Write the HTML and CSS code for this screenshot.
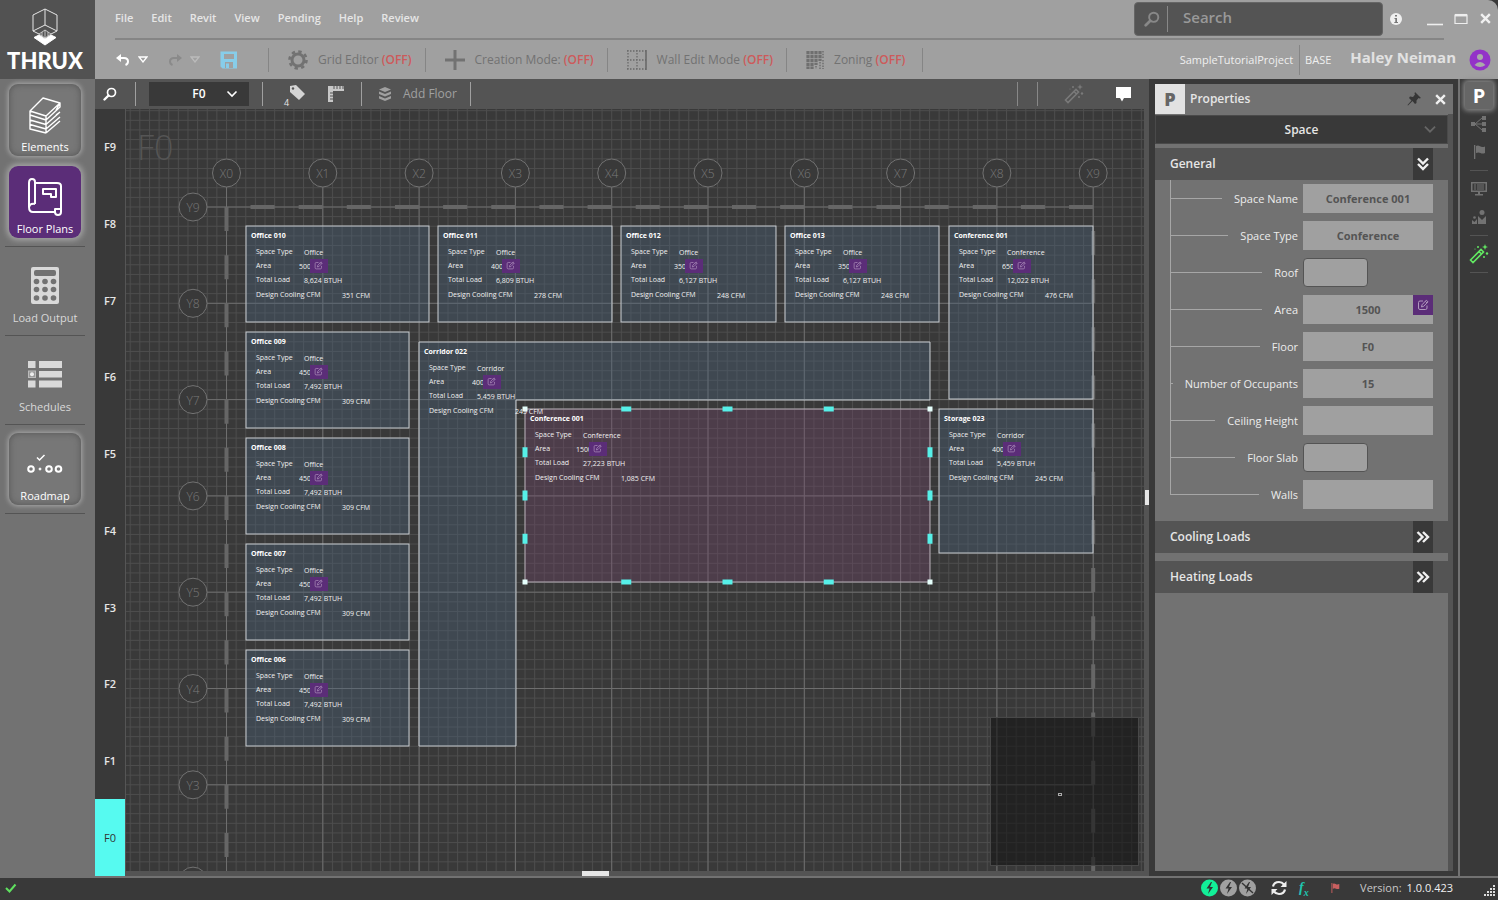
FILE: index.html
```html
<!DOCTYPE html>
<html lang="en">
<head>
<meta charset="utf-8">
<title>THRUX</title>
<link rel="stylesheet" href="styles.css">
</head>
<body>
<svg class="defs" aria-hidden="true">
  <symbol id="edit" viewBox="0 0 12 12"><path d="M6 2H3Q1.500 2 1.500 3.500V9Q1.500 10.500 3 10.500H8.500Q10 10.500 10 9V6.500M4.500 8L5 5.800L9.300 1.200L11 2.800L6.700 7.300Z M8.300 2.300L9.900 3.900" fill="none" stroke="currentColor" stroke-width="1"/></symbol>
  <symbol id="wand" viewBox="0 0 20 20"><path d="M1.500 16L12 5.500L14.500 8L4 18.500Z M10 7.500L12.500 10" fill="none" stroke="currentColor" stroke-width="1.600"/><path d="M16 0L16.800 2.200L19 3L16.800 3.800L16 6L15.200 3.800L13 3L15.200 2.200Z"/><circle cx="9" cy="3" r="1"/><circle cx="18" cy="9.500" r="1.200"/><circle cx="15" cy="13" r="1"/><circle cx="6" cy="5" r=".6"/></symbol>
  <symbol id="lens" viewBox="0 0 14 14"><circle cx="8.500" cy="5.500" r="4" fill="none" stroke="currentColor" stroke-width="1.700"/><path d="M5.500 8.500L1.500 12.500" stroke="currentColor" stroke-width="2.400" stroke-linecap="round"/></symbol>
  <symbol id="chev" viewBox="0 0 12 8"><path d="M1.500 1.500L6 6L10.500 1.500" fill="none" stroke="currentColor" stroke-width="1.600"/></symbol>
  <symbol id="dchev" viewBox="0 0 14 14"><path d="M1.500 2L6.500 7L1.500 12M7 2L12 7L7 12" fill="none" stroke="currentColor" stroke-width="2.400"/></symbol>
  <symbol id="undo" viewBox="0 0 14 12"><path d="M2.500 4H8Q12 4 12 7.500Q12 10 9.500 11" fill="none" stroke="currentColor" stroke-width="2"/><path d="M0 4L5 0V8Z"/></symbol>
  <symbol id="tri" viewBox="0 0 10 7"><path d="M1 1H9L5 6Z" fill="none" stroke="currentColor" stroke-width="1.300"/></symbol>
  <symbol id="cross" viewBox="0 0 12 12"><path d="M2 2L10 10M10 2L2 10" stroke="currentColor" stroke-width="2.200"/></symbol>
  <symbol id="flag" viewBox="0 0 12 14"><path d="M1 0H2.300V14H1Z M3 1Q5 0 7 1.300T12 1.500V8Q9.500 9 7.500 8T3 8Z"/></symbol>
</svg>
<div class="app">
  <div class="brand">
    <svg width="28" height="38" viewBox="0 0 28 38" fill="none" stroke="#fff" stroke-width="1"><path d="M14 1L26 7V23L20 26M14 1L2 7V23L8 26M14 1V17M14 17L2 23M14 17L26 23" stroke="#e6e6e6"/><path d="M3 29.500L8 27L14 31L20 27L25 29.500L14 37Z" fill="#fff"/><path d="M8 26L14 22L20 26L14 30Z" stroke="#ddd" stroke-width=".8"/><path d="M11 24V28M14 22V30M17 24V28" stroke="#ddd" stroke-width=".8"/></svg>
    <div class="wordmark">THRUX</div>
  </div>

  <header class="header">
    <div class="menubar">
      <nav class="menu"><button>File</button><button>Edit</button><button>Revit</button><button>View</button><button>Pending</button><button>Help</button><button>Review</button></nav>
      <div class="windowbar">
        <label class="search"><svg class="lens" width="16" height="16"><use href="#lens"/></svg><input type="search" placeholder="Search" aria-label="Search"></label>
        <svg width="12" height="12" viewBox="0 0 12 12"><circle cx="6" cy="6" r="6" fill="#efefef"/><path d="M5 2H7V3.600H5Z M4.500 5H7V9H8V10H4.300V9H5.300V6H4.500Z" fill="#777"/></svg>
        <div class="wincontrols">
          <button aria-label="Minimize"><svg width="16" height="16"><path d="M0 13.500H16" stroke="#eee" stroke-width="1.600"/></svg></button>
          <button aria-label="Maximize"><svg width="14" height="12"><path d="M1 2H13V10.500H1Z" fill="none" stroke="#eee" stroke-width="1.200"/><path d="M1 2.200H13" stroke="#eee" stroke-width="2.500"/></svg></button>
          <button aria-label="Close"><svg class="light" width="13" height="13"><use href="#cross"/></svg></button>
        </div>
      </div>
    </div>
    <div class="tools">
      <div class="history">
        <button class="white" aria-label="Undo"><svg width="14" height="12"><use href="#undo"/></svg></button>
        <button class="white" aria-label="Undo list"><svg width="10" height="7"><use href="#tri"/></svg></button>
        <button class="redo" aria-label="Redo"><svg class="flip" width="14" height="12"><use href="#undo"/></svg></button>
        <button class="faint" aria-label="Redo list"><svg width="10" height="7"><use href="#tri"/></svg></button>
        <button class="save" aria-label="Save"><svg width="18" height="18" viewBox="0 0 18 18"><path d="M1 0.500H17V17.500H2.500L0.500 15.500V0.500Z M4 2V8H14V2Z M5 11V17H13V11Z" fill="#87cde9" fill-rule="evenodd"/><path d="M6 12.500H9V17H6Z M4 1.500H14V3H4Z" fill="#87cde9"/></svg></button>
      </div>
      <button class="mode"><svg width="20" height="20" viewBox="0 0 20 20"><circle cx="10" cy="10" r="6" fill="none" stroke="#727272" stroke-width="3"/><circle cx="10" cy="10" r="8.500" fill="none" stroke="#727272" stroke-width="2.600" stroke-dasharray="3.400 3.276"/></svg><span>Grid Editor <b>(OFF)</b></span></button>
      <button class="mode"><svg width="20" height="20"><path d="M10 0V20M0 10H20" stroke="#727272" stroke-width="3"/></svg><span>Creation Mode: <b>(OFF)</b></span></button>
      <button class="mode"><svg width="20" height="20"><path d="M0 1H19M0 19H19M1 0V20M10 0V20M0 10H19" stroke="#6a6a6a" stroke-width="1.300" stroke-dasharray="1.500 1.500"/><path d="M19 0V20" stroke="#666" stroke-width="1.500"/></svg><span>Wall Edit Mode <b>(OFF)</b></span></button>
      <button class="mode zoning"><svg width="18" height="18"><path d="M2 0V18M6 0V18M10 0V14M14 0V10" stroke="#6f6f6f" stroke-width="3.200" stroke-dasharray="3.200 .7"/><path d="M17 0V8M10 15V18M14 11V18M17 9V18" stroke="#777" stroke-width="1.800" stroke-dasharray="1.500 1.200"/></svg><span>Zoning <b>(OFF)</b></span></button>
      <div class="account"><span class="project">SampleTutorialProject</span><span class="base">BASE</span><strong>Haley Neiman</strong>
        <svg width="22" height="22" viewBox="0 0 22 22"><circle cx="11" cy="11" r="10.500" fill="#9333c8"/><circle cx="11" cy="8" r="3" fill="#aaa"/><path d="M5.500 16Q11 10 16.500 16Q11 20 5.500 16Z" fill="#aaa"/></svg></div>
    </div>
  </header>

  <nav class="sidebar">
    <button class="side raised"><svg width="34" height="40" viewBox="0 0 34 40" fill="none" stroke="#fff" stroke-width="1.400" stroke-linejoin="round"><path d="M2 16L15 3L32 8L18 21Z M2 16V34L18 38M18 21V38M2 20L18 25L32 12V8M2 25L18 29.500L32 17M2 29.500L18 34L32 22M18 38L32 26M32 8L28 15M32 17L28 20"/></svg><span>Elements</span></button>
    <button class="side current"><svg width="36" height="40" viewBox="0 0 36 40" fill="none" stroke="#fff" stroke-width="2" stroke-linejoin="round"><path d="M8 6H30Q34 6 34 9V35Q34 38 31 38Q28 38 28 35V32M8 27V5Q8 2 5 2Q2 2 2 6V30Q2 35 6 35H28V32H34M2 30Q3 26 8 27"/><path d="M16 12H29V20H24V17H16Z"/></svg><span>Floor Plans</span></button>
    <button class="side plain"><svg width="28" height="37" viewBox="0 0 28 37"><path fill="#d9d9d9" fill-rule="evenodd" d="M2 0H26Q28 0 28 2V35Q28 37 26 37H2Q0 37 0 35V2Q0 0 2 0Z M5 3Q3 3 3 5V7Q3 9 5 9H23Q25 9 25 7V5Q25 3 23 3Z"/><g fill="#727272"><circle cx="5.500" cy="14.500" r="2.800"/><circle cx="14" cy="14.500" r="2.800"/><circle cx="22.500" cy="14.500" r="2.800"/><circle cx="5.500" cy="22.500" r="2.800"/><circle cx="14" cy="22.500" r="2.800"/><circle cx="22.500" cy="22.500" r="2.800"/><circle cx="5.500" cy="31" r="2.800"/><circle cx="14" cy="31" r="2.800"/><circle cx="22.500" cy="31" r="2.800"/></g></svg><span>Load Output</span></button>
    <button class="side plain"><svg width="34" height="37" viewBox="0 0 34 37" fill="#d9d9d9"><path d="M0 5H7.500V12H0Z M11 5H34V12H11Z M11 15H34V21.500H11Z M0 24.500H7.500V31.500H0Z M11 24.500H34V31.500H11Z"/><rect x=".5" y="15" width="7" height="6.500" fill="#999" stroke="#bbb"/><circle cx="4" cy="18.200" r="2" fill="#eee"/></svg><span>Schedules</span></button>
    <button class="side raised"><svg width="36" height="40" viewBox="0 0 36 40" fill="none" stroke="#fff" stroke-width="2"><circle cx="4" cy="25" r="2.800"/><circle cx="13" cy="25" r="1" fill="#fff" stroke-width="1"/><circle cx="22" cy="25" r="2.800"/><circle cx="31.500" cy="25" r="2.800"/><path d="M10 13.500L12.500 16L17.500 11" stroke-width="1.500"/></svg><span>Roadmap</span></button>
  </nav>

  <main class="workspace">
    <div class="subbar">
      <button class="find white" aria-label="Find"><svg width="14" height="14"><use href="#lens"/></svg></button>
      <button class="floorpick"><span>F0</span><svg width="12" height="8"><use href="#chev"/></svg></button>
      <div class="annotate">
        <button aria-label="Tags"><svg width="24" height="20" viewBox="0 0 24 20"><path d="M8 2L14 1L23 10L17 16L8 8Z" fill="#d4d4d4"/><circle cx="11" cy="4.500" r="1.200" fill="#545454"/></svg><small>4</small></button>
        <button aria-label="Rulers"><svg width="16" height="16"><path d="M0 0H16V5H5V16H0Z" fill="#c8c8c8"/><path d="M6 0V3M9 0V3M12 0V3M15 0V3M2 7H5M2 10H5M2 13H5" stroke="#545454"/></svg></button>
      </div>
      <button class="addfloor"><svg width="14" height="14" viewBox="0 0 14 14" fill="#a0a0a0"><path d="M7 0L13 2.500L7 5L1 2.500Z M1 4.500L7 7L13 4.500V7L7 9.500L1 7Z M1 9L7 11.500L13 9V11.500L7 14L1 11.500Z"/></svg><span>Add Floor</span></button>
      <div class="subright"><button class="wand" aria-label="Auto"><svg width="20" height="20"><use href="#wand"/></svg></button><button aria-label="Comments"><svg width="16" height="16"><path d="M0 1H15V12H8L6 15.500L4 12H0Z" fill="#fff"/></svg></button></div>
    </div>
    <div class="floors" id="floors"></div>
    <div class="canvas">
      <svg class="plan" id="plan"></svg>
      <div class="watermark">F0</div>
      <div id="labels"></div>
      <div class="minimap"><i></i></div>
    </div>
    <div class="vsplit"><i></i></div>
    <div class="hsplit"><i></i></div>
  </main>

  <aside class="dock">
    <div class="paneltitle"><b>P</b><span>Properties</span>
      <button aria-label="Pin"><svg width="14" height="14" viewBox="0 0 14 14"><path d="M8 0L14 6L12.500 6.500L11.500 6L9.500 8.500L9.500 11L8 12L5.500 9L1 13.500L0.500 13L4.500 8.500L2 6L3 4.500L6 5L8 2.500L7.500 1.500Z" fill="#363636"/></svg></button>
      <button aria-label="Close panel"><svg class="light" width="13" height="13"><use href="#cross"/></svg></button></div>
    <div class="panel">
      <button class="kind"><span>Space</span><svg width="14" height="9"><use href="#chev"/></svg></button>
      <section>
        <h2>General<button class="down" aria-label="Collapse General"><svg width="14" height="14"><use href="#dchev"/></svg></button></h2>
        <div class="fields">
          <div class="field"><label for="f1">Space Name</label><input id="f1" value="Conference 001"></div>
          <div class="field"><label for="f2">Space Type</label><input id="f2" value="Conference"></div>
          <div class="field"><label for="f3">Roof</label><span class="slot"><input class="short" id="f3"></span></div>
          <div class="field"><label for="f4">Area</label><span class="slot"><input id="f4" value="1500"><button class="override" aria-label="Edit area"><svg width="12" height="12"><use href="#edit"/></svg></button></span></div>
          <div class="field"><label for="f5">Floor</label><input id="f5" value="F0"></div>
          <div class="field"><label for="f6">Number of Occupants</label><input id="f6" value="15"></div>
          <div class="field"><label for="f7">Ceiling Height</label><input id="f7"></div>
          <div class="field"><label for="f8">Floor Slab</label><span class="slot"><input class="short" id="f8"></span></div>
          <div class="field"><label for="f9">Walls</label><input id="f9"></div>
        </div>
      </section>
      <section><h2>Cooling Loads<button aria-label="Expand Cooling Loads"><svg width="14" height="14"><use href="#dchev"/></svg></button></h2></section>
      <section><h2>Heating Loads<button aria-label="Expand Heating Loads"><svg width="14" height="14"><use href="#dchev"/></svg></button></h2></section>
    </div>
  </aside>

  <nav class="rail">
    <button class="p">P</button>
    <button aria-label="Tree"><svg width="16" height="16" viewBox="0 0 16 16"><path d="M0 6H4V10H0Z M11 0H15V4H11Z M11 6H15V10H11Z M11 12H15V16H11Z"/><path d="M4 8H11M4 8L11 2M4 8L11 14" stroke="currentColor" fill="none"/></svg></button>
    <button aria-label="Flags"><svg width="12" height="14"><use href="#flag"/></svg></button>
    <hr>
    <button aria-label="Display"><svg width="16" height="14" viewBox="0 0 16 14"><path fill-rule="evenodd" d="M0 0H16V10H9V12H12V13.500H4V12H7V10H0Z M1.500 1.500V8.500H14.500V1.500Z"/><path d="M3 3H5M6 3H13M3 5H5M6 5H13M3 7H5M6 7H13" stroke="currentColor"/></svg></button>
    <button aria-label="People"><svg width="14" height="14" viewBox="0 0 14 14"><circle cx="10" cy="2.500" r="2.500"/><circle cx="2.500" cy="7.500" r="1.300"/><path d="M0 10L2.500 12L5 9V14H0Z M6 6L10 10L14 6V14H6Z"/></svg></button>
    <hr>
    <button class="magic" aria-label="Magic"><svg width="20" height="20"><use href="#wand"/></svg></button>
    <hr>
  </nav>

  <footer class="status">
    <svg width="12" height="12"><path d="M1 6L4.500 9.500L10.500 2.500" fill="none" stroke="#5fe05f" stroke-width="2"/></svg>
    <div class="statusright">
      <svg width="56" height="18" viewBox="0 0 56 18"><circle cx="8.500" cy="9" r="8.500" fill="#12f098"/><circle cx="27.500" cy="9" r="8.500" fill="#a0a0a0"/><circle cx="46.500" cy="9" r="8.500" fill="#a0a0a0"/><g fill="#333"><path d="M10 3L5.500 9.500H8.500L7 15L12 8H9L11 3Z"/><path d="M29 3L24.500 9.500H27.500L26 15L31 8H28L30 3Z"/><path d="M48 3L43.500 9.500H46.500L45 15L50 8H47L49 3Z"/></g><path d="M41 4L52 14" stroke="#333" stroke-width="1.400"/></svg>
      <svg class="refresh" width="16" height="16" viewBox="0 0 16 16" fill="none" stroke="#eee" stroke-width="2.200"><path d="M2 6.500Q3 2 8 2Q11 2 13 4.500M14 9.500Q13 14 8 14Q5 14 3 11.500"/><path d="M15.500 1V7H9.500Z M.5 15V9H6.500Z" fill="#eee" stroke="none"/></svg>
      <em>f<sub>x</sub></em>
      <svg class="red" width="10" height="10"><use href="#flag"/></svg>
      <span class="version">Version:</span><span class="number">1.0.0.423</span>
      <svg class="grip" width="12" height="12" fill="#ddd"><path d="M9 0h2v2h-2z M6 3h2v2h-2z M9 3h2v2h-2z M3 6h2v2h-2z M6 6h2v2h-2z M9 6h2v2h-2z M0 9h2v2h-2z M3 9h2v2h-2z M6 9h2v2h-2z M9 9h2v2h-2z"/></svg>
    </div>
  </footer>
</div>
<script src="plan.js"></script>
</body>
</html>
```
FILE: plan.js
```js
const STEP = 96.3, X0 = 101.5, Y0 = 98;
const col = i => X0 + STEP * i;
const row = i => Y0 + STEP * i;

const rooms = [
  { x: 121, y: 117, w: 183, h: 96, name: "Office 010", type: "Office", area: "500", load: "8,624 BTUH", cfm: "351 CFM" },
  { x: 313, y: 117, w: 174, h: 96, name: "Office 011", type: "Office", area: "400", load: "6,809 BTUH", cfm: "278 CFM" },
  { x: 496, y: 117, w: 155, h: 96, name: "Office 012", type: "Office", area: "350", load: "6,127 BTUH", cfm: "248 CFM" },
  { x: 660, y: 117, w: 154, h: 96, name: "Office 013", type: "Office", area: "350", load: "6,127 BTUH", cfm: "248 CFM" },
  { x: 824, y: 117, w: 144, h: 173, name: "Conference 001", type: "Conference", area: "650", load: "12,022 BTUH", cfm: "476 CFM" },
  { x: 121, y: 223, w: 163, h: 96, name: "Office 009", type: "Office", area: "450", load: "7,492 BTUH", cfm: "309 CFM" },
  { x: 121, y: 329, w: 163, h: 96, name: "Office 008", type: "Office", area: "450", load: "7,492 BTUH", cfm: "309 CFM" },
  { x: 121, y: 435, w: 163, h: 96, name: "Office 007", type: "Office", area: "450", load: "7,492 BTUH", cfm: "309 CFM" },
  { x: 121, y: 541, w: 163, h: 96, name: "Office 006", type: "Office", area: "450", load: "7,492 BTUH", cfm: "309 CFM" },
  { x: 294, y: 233, points: "294,233 805,233 805,291 391,291 391,637 294,637", name: "Corridor 022", type: "Corridor", area: "400", load: "5,459 BTUH", cfm: "245 CFM" },
  { x: 400, y: 300, w: 405, h: 173, selected: true, name: "Conference 001", type: "Conference", area: "1500", load: "27,223 BTUH", cfm: "1,085 CFM" },
  { x: 814, y: 300, w: 154, h: 144, name: "Storage 023", type: "Corridor", area: "400", load: "5,459 BTUH", cfm: "245 CFM" }
];

let s = `<defs><pattern id="minor" patternUnits="userSpaceOnUse" x="${X0 - 0.5}" y="${Y0 - 0.5}" width="9.63" height="9.63"><path d="M.5 0V9.63M0 .5H9.63" class="minor"/></pattern></defs>`;
s += `<rect width="100%" height="100%" fill="url(#minor)"/>`;
for (let i = 0; i < 10; i++) {
  s += `<path class="axis" d="M${col(i)} 78V900"/><circle class="bubble" cx="${col(i)}" cy="64" r="14"/><text x="${col(i)}" y="69">X${i}</text>`;
}
for (let i = 0; i < 8; i++) {
  s += `<path class="axis" d="M82 ${row(i)}H${col(9)}"/><circle class="bubble" cx="68" cy="${row(i)}" r="14"/>`;
  if (i < 7) s += `<text x="68" y="${row(i) + 5}">Y${9 - i}</text>`;
}
s += `<path class="bound" d="M${X0 + 24} ${Y0}H${col(9)}M${X0} ${Y0}V900M${col(9)} ${Y0 + 24}V900"/>`;
for (const r of rooms) {
  const cls = r.selected ? "space chosen" : "space";
  s += r.points ? `<polygon class="${cls}" points="${r.points}"/>` : `<rect class="${cls}" x="${r.x}" y="${r.y}" width="${r.w}" height="${r.h}"/>`;
  if (r.selected) {
    for (let k = 1; k < 4; k++) {
      for (const y of [r.y, r.y + r.h]) s += `<rect class="grab" x="${r.x + r.w * k / 4 - 5}" y="${y - 2.5}" width="10" height="5"/>`;
      for (const x of [r.x, r.x + r.w]) s += `<rect class="grab" x="${x - 2.5}" y="${r.y + r.h * k / 4 - 5}" width="5" height="10"/>`;
    }
    for (const x of [r.x, r.x + r.w]) for (const y of [r.y, r.y + r.h]) s += `<rect class="corner" x="${x - 2.5}" y="${y - 2.5}" width="5" height="5"/>`;
  }
}
document.getElementById("plan").innerHTML = s;

document.getElementById("labels").innerHTML = rooms.map(r => `<dl class="room" style="left:${r.x}px;top:${r.y}px">
<dt class="name">${r.name}</dt>
<div class="r1"><dt>Space Type</dt><dd>${r.type}</dd></div>
<div class="r2 ${r.area.length > 3 ? "long" : ""}"><dt>Area</dt><dd>${r.area}</dd><svg width="18" height="14"><use href="#edit" x="4" y="2" width="9" height="9"/></svg></div>
<div class="r3"><dt>Total Load</dt><dd>${r.load}</dd></div>
<div class="r4"><dt>Design Cooling CFM</dt><dd>${r.cfm}</dd></div></dl>`).join("");

document.getElementById("floors").innerHTML = [9, 8, 7, 6, 5, 4, 3, 2, 1, 0].map(n => `<button class="${n ? "" : "active"}">F${n}</button>`).join("");
```
FILE: styles.css
```css
* { box-sizing: border-box; }
body { margin: 0; background: #1a1320; color: #e6e6e6; font: 12px/16px "Open Sans", "Noto Sans", sans-serif; }
button { border: 0; padding: 0; background: none; color: inherit; font: inherit; display: flex; align-items: center; justify-content: center; }
svg { display: block; flex: none; }
svg:not([fill]) { fill: currentColor; }
.defs { position: absolute; width: 0; height: 0; }
.white { color: #fff; }
.light { color: #f0f0f0; }

.app { height: 100vh; display: grid; grid-template-columns: 95px 1fr 311px 38px; grid-template-rows: 79px 1fr 20px; padding-bottom: 2px; overflow: hidden; background: #393939; }

.brand { background: #525252; display: flex; flex-direction: column; align-items: center; padding-top: 8px; color: #fff; }
.wordmark { font: 900 22px/30px Lato, sans-serif; padding-right: 5px; }
.brand svg { margin-right: 5px; }

.header { grid-column: 2 / -1; background: #a0a0a0; border-top-right-radius: 10px; }
.menubar { height: 38px; display: flex; justify-content: space-between; padding-left: 20px; }
.menu { display: flex; gap: 18px; font-weight: 600; font-size: 11px; height: 36px; align-items: center; }
.windowbar { display: flex; align-items: center; gap: 7px; padding-right: 6px; height: 37px; }
.search { width: 249px; height: 34px; background: #545454; border: 1px solid #666; border-radius: 4px; display: flex; align-items: center; padding-left: 9px; color: #999; }
.search .lens { color: #888; margin-right: 7px; }
.search input { flex: 1; min-width: 0; height: 26px; border: 0; border-left: 1px solid #888; background: none; outline: 0; padding: 0 15px 3px; font: 600 15px/20px "Open Sans", sans-serif; color: #eee; }
.search input::placeholder { color: #999; opacity: 1; }
.wincontrols { display: flex; align-items: center; gap: 11px; margin-left: 18px; }
.tools { height: 41px; margin-left: 20px; padding-top: 2px; display: flex; align-items: center; position: relative; color: #727272; }
.tools::before { content: ""; position: absolute; left: 0; right: 54px; top: 0; height: 2px; background: #858585; }
.history { display: flex; align-items: center; gap: 8px; width: 154px; height: 24px; padding-left: 1px; border-right: 1px solid #858585; }
.redo { margin-left: 12px; color: #8a8a8a; }
.faint { color: #bbb; }
.save { margin-left: 12px; }
.flip { transform: scaleX(-1); }
.mode { height: 24px; gap: 10px; padding: 0 13px 0 19px; border-right: 1px solid #858585; }
.mode b { color: #cd5a5a; font-weight: 600; }
.zoning { padding-right: 17px; }
.account { margin-left: auto; display: flex; align-items: center; color: #efefef; padding-right: 7px; font-size: 11px; }
.project { line-height: 30px; padding-right: 6px; border-right: 1px solid #858585; }
.base { padding: 0 19px 0 5px; }
.account strong { font-size: 15px; padding-bottom: 6px; margin-right: 13px; color: #e2e2e2; font-weight: 700; }

.sidebar { background: #727272; padding: 0 5px; grid-row: 2; display: flex; flex-direction: column; align-items: stretch; }
.side { flex-direction: column; flex: none; font-size: 11px; line-height: 14px; }
.side.raised, .side.current { margin: 5px 9px 5px 4px; height: 72px; padding-top: 11px; border-radius: 9px; background: #777; color: #fff; gap: 5px; box-shadow: 0 0 5px 1px #aaa, inset 0 0 6px #555; justify-content: flex-start; }
.side.current { background: #5b2d78; box-shadow: 0 0 6px 2px #aaa; }
.side.plain { height: 89px; margin-right: 5px; border-top: 1px solid #545454; gap: 7px; padding-top: 10px; color: #d9d9d9; }
.sidebar .side:nth-child(2) { margin-bottom: 8px; }
.side:nth-child(4) { border-bottom: 1px solid #545454; height: 90px; }
.sidebar .side:nth-child(5) { margin-top: 8px; }
.sidebar::after { content: ""; height: 1px; margin: 3px 5px 0 0; background: #545454; }

.workspace { grid-row: 2; grid-column: 2; display: grid; grid-template-columns: 30px 1fr 5px; grid-template-rows: 30px 1fr 5px; border-bottom: 2px solid #727272; min-width: 0; }
.subbar { grid-column: 1 / -1; background: #545454; display: flex; align-items: center; }
.find { width: 41px; height: 24px; padding-right: 11px; border-right: 1px solid #a0a0a0; }
.floorpick { width: 100px; height: 24px; margin-left: 13px; background: #393939; color: #fff; font-weight: 600; gap: 20px; padding-left: 32px; }
.annotate { display: flex; gap: 22px; margin-left: 13px; height: 24px; align-items: center; padding: 0 17px 0 19px; border-left: 1px solid #a0a0a0; border-right: 1px solid #a0a0a0; }
.annotate button { position: relative; }
.annotate small { position: absolute; left: 2px; bottom: -5px; font-size: 9px; line-height: 12px; }
.addfloor { gap: 11px; height: 24px; padding: 0 13px 0 16px; border-right: 1px solid #a0a0a0; color: #a0a0a0; }
.subright { margin-left: auto; height: 24px; display: flex; align-items: center; gap: 32px; border-left: 1px solid #888; padding: 0 17px 0 0; }
.wand { color: #7a7a7a; border-left: 1px solid #888; height: 24px; margin-left: 19px; padding-left: 26px; }
.floors { grid-row: 2 / -1; display: flex; flex-direction: column; background: #393939; font-weight: 600; font-size: 11px; }
.floors button { flex: 1; }
.floors .active { background: #56faf0; color: #333; font-weight: 400; }
.canvas { position: relative; overflow: hidden; border-left: 1px solid #555; min-width: 0; min-height: 0; }
.vsplit { background: #545454; display: flex; align-items: center; justify-content: flex-end; }
.vsplit i { width: 4px; height: 15px; background: #e6e6e6; margin-top: 15px; }
.hsplit { grid-column: 2 / -1; background: #545454; display: flex; justify-content: center; }
.hsplit i { width: 27px; height: 5px; background: #e6e6e6; margin-right: 84px; }

.plan { position: absolute; left: -1px; top: 0; width: calc(100% + 1px); height: 100%; }
.minor { stroke: #4d4d4d; stroke-width: 1; fill: none; }
.axis { stroke: #6e6e6e; stroke-width: 1; }
.bubble { fill: #393939; stroke: #727272; }
.plan text { fill: #7a7a7a; stroke: none; font: 300 12px "Open Sans", sans-serif; text-anchor: middle; }
.bound { fill: none; stroke: #666; stroke-width: 4; stroke-dasharray: 24.07 24.08; }
.space { fill: #4a6079; fill-opacity: .38; stroke: #c8ccd0; stroke-width: 1; }
.chosen { fill: #74446a; fill-opacity: .35; stroke: #b8b0b8; }
.grab { fill: #56f0e8; }
.corner { fill: #e6fffc; }
.watermark { position: absolute; left: 11px; top: 16px; font: 300 34px/44px "Open Sans", sans-serif; color: #555; }
.room { position: absolute; margin: 0; padding: 4px 0 0 9px; font-size: 7px; line-height: 14px; white-space: nowrap; color: #f0f0f0; }
.room div { display: flex; height: 14px; }
.room dd { margin: 0; padding-top: 1px; }
.room .name { font-size: 7px; line-height: 12px; font-weight: 700; color: #fff; margin: 0 0 3px -5px; }
.r1 dt { width: 48px; }
.r2 dt { width: 43px; }
.r2 dd { width: 11px; overflow: hidden; }
.r2.long dt { width: 41px; }
.r2.long dd { width: 13px; }
.r2 svg { background: #5b2d78; color: #a98bb8; }
.r3 dt { width: 48px; }
.r4 dt { width: 86px; }
.room .r4 { padding-top: 1px; }
.minimap { position: absolute; right: 5px; bottom: 5px; width: 149px; height: 149px; background: rgba(20,20,20,.6); border: 1px solid #484848; }
.minimap i { position: absolute; left: 67px; top: 75px; width: 4px; height: 3px; border: 1px solid #aaa; }

.dock { grid-column: 3; grid-row: 2; display: flex; flex-direction: column; padding: 5px 5px 5px 6px; border-right: 2px solid #727272; border-bottom: 2px solid #727272; background: #393939; }
.paneltitle { height: 30px; background: #727272; display: flex; align-items: center; gap: 5px; padding-right: 6px; font-weight: 600; }
.paneltitle b { width: 30px; height: 30px; background: #e2e2e2; color: #666; font-size: 18px; line-height: 30px; text-align: center; }
.paneltitle span { flex: 1; }
.paneltitle button + button { margin-left: 8px; }
.panel { flex: 1; background: #727272; border-right: 5px solid #545454; padding-top: 1px; }
.kind { width: 100%; height: 29px; background: #393939; border: 1px solid #4a4a4a; font-weight: 600; position: relative; }
.kind svg { position: absolute; right: 10px; top: 9px; color: #666; }
.panel section { margin-top: 8px; }
.panel section:first-of-type { margin-top: 4px; }
h2 { margin: 0; height: 32px; padding: 0 15px; display: flex; align-items: center; justify-content: space-between; background: #545454; font: 600 12px/16px "Open Sans", sans-serif; }
h2 button { width: 20px; height: 32px; background: #393939; color: #f0f0f0; }
.down svg { transform: rotate(90deg); }
.fields { position: relative; display: flex; flex-direction: column; gap: 8px; padding: 4px 15px 12px; }
.fields::before { content: ""; position: absolute; left: 15px; top: 0; bottom: 26px; border-left: 1px solid #a6a6a6; }
.panel section:nth-of-type(2) { margin-top: 0; }
.field { display: flex; align-items: center; height: 29px; }
.field::before { content: ""; flex: 1; height: 1px; background: #a6a6a6; margin-right: 12px; }
.field label { margin-right: 5px; color: #ececec; white-space: nowrap; font-size: 11px; }
.field input { width: 130px; height: 29px; border: 0; background: #a0a0a0; color: #545454; text-align: center; font: 700 11px/16px "Open Sans", sans-serif; }
.field input:focus { outline: 1px solid #56faf0; }
.slot { width: 130px; position: relative; display: flex; }
.field .short { width: 65px; border: 1px solid #545454; border-radius: 4px; }
.override { position: absolute; right: 0; top: 0; width: 20px; height: 20px; background: #5b2d78; color: #b098bd; }

.rail { grid-column: 4; grid-row: 2; display: flex; flex-direction: column; align-items: center; padding-top: 3px; color: #727272; border-bottom: 2px solid #727272; }
.rail button { height: 28px; width: 28px; }
.rail .p { height: 27px; background: #666; border-radius: 3px; color: #fff; font-size: 20px; font-weight: 700; box-shadow: 0 0 5px 2px #888; margin-bottom: 1px; }
.rail hr { width: 18px; height: 1px; margin: 4px 0; border: 0; background: #545454; }
.rail .magic { color: #62e862; }

.status { grid-column: 1 / -1; display: flex; align-items: center; justify-content: space-between; padding: 0 2px 0 5px; background: #393939; }
.statusright { display: flex; align-items: center; font-size: 11px; }
.refresh { margin: 0 12px 0 14px; }
.status em { color: #1fc5b0; font: italic 700 14px/16px "Liberation Serif", serif; width: 18px; }
.status sub { font-size: 10px; line-height: 8px; }
.red { color: #c95f5f; margin: 0 20px 0 13px; }
.version { color: #c8c8c8; }
.number { margin-left: 5px; color: #f0f0f0; }
.grip { align-self: flex-end; margin-left: 31px; }
```
